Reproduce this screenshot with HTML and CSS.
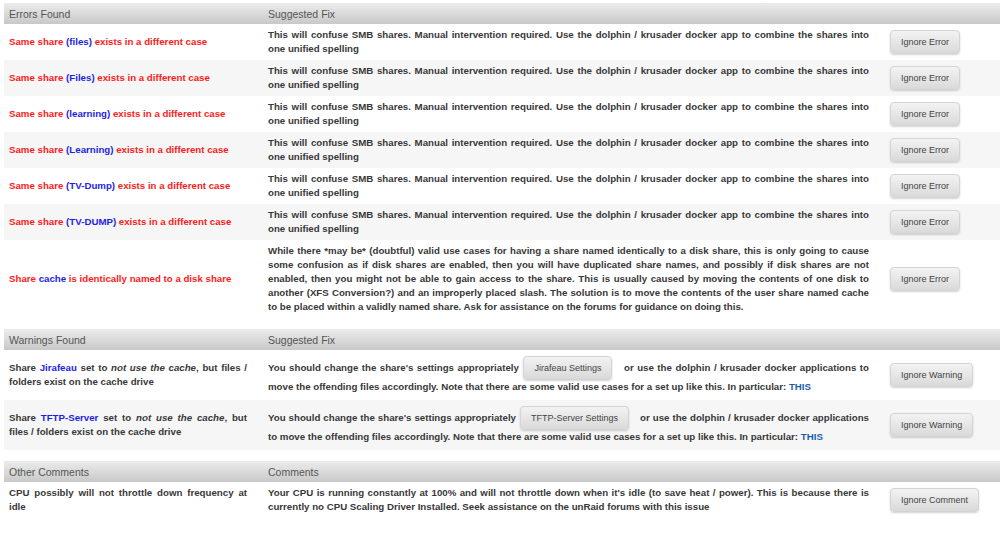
FILE: index.html
```html
<!DOCTYPE html>
<html lang="en">
<head>
  <meta charset="UTF-8" />
  <title>Fix Common Problems</title>
  <link rel="stylesheet" href="styles.css">
</head>
<body>
  <div class="results">

    <table class="report">
      <colgroup><col class="c-issue"><col class="c-fix"><col class="c-act"></colgroup>
      <thead>
        <tr><th>Errors Found</th><th>Suggested Fix</th><th></th></tr>
      </thead>
      <tbody>
        <tr>
          <td class="err">Same share <span class="share">(files)</span> exists in a different case</td>
          <td>This will confuse SMB shares. Manual intervention required. Use the dolphin / krusader docker app to combine the shares into one unified spelling</td>
          <td><button class="btn">Ignore Error</button></td>
        </tr>
        <tr>
          <td class="err">Same share <span class="share">(Files)</span> exists in a different case</td>
          <td>This will confuse SMB shares. Manual intervention required. Use the dolphin / krusader docker app to combine the shares into one unified spelling</td>
          <td><button class="btn">Ignore Error</button></td>
        </tr>
        <tr>
          <td class="err">Same share <span class="share">(learning)</span> exists in a different case</td>
          <td>This will confuse SMB shares. Manual intervention required. Use the dolphin / krusader docker app to combine the shares into one unified spelling</td>
          <td><button class="btn">Ignore Error</button></td>
        </tr>
        <tr>
          <td class="err">Same share <span class="share">(Learning)</span> exists in a different case</td>
          <td>This will confuse SMB shares. Manual intervention required. Use the dolphin / krusader docker app to combine the shares into one unified spelling</td>
          <td><button class="btn">Ignore Error</button></td>
        </tr>
        <tr>
          <td class="err">Same share <span class="share">(TV-Dump)</span> exists in a different case</td>
          <td>This will confuse SMB shares. Manual intervention required. Use the dolphin / krusader docker app to combine the shares into one unified spelling</td>
          <td><button class="btn">Ignore Error</button></td>
        </tr>
        <tr>
          <td class="err">Same share <span class="share">(TV-DUMP)</span> exists in a different case</td>
          <td>This will confuse SMB shares. Manual intervention required. Use the dolphin / krusader docker app to combine the shares into one unified spelling</td>
          <td><button class="btn">Ignore Error</button></td>
        </tr>
        <tr>
          <td class="err">Share <span class="share">cache</span> is identically named to a disk share</td>
          <td>While there *may be* (doubtful) valid use cases for having a share named identically to a disk share, this is only going to cause some confusion as if disk shares are enabled, then you will have duplicated share names, and possibly if disk shares are not enabled, then you might not be able to gain access to the share. This is usually caused by moving the contents of one disk to another (XFS Conversion?) and an improperly placed slash. The solution is to move the contents of the user share named cache to be placed within a validly named share. Ask for assistance on the forums for guidance on doing this.</td>
          <td><button class="btn">Ignore Error</button></td>
        </tr>
      </tbody>
    </table>

    <table class="report">
      <colgroup><col class="c-issue"><col class="c-fix"><col class="c-act"></colgroup>
      <thead>
        <tr><th>Warnings Found</th><th>Suggested Fix</th><th></th></tr>
      </thead>
      <tbody>
        <tr class="tall">
          <td>Share <span class="share">Jirafeau</span> set to <em>not use the cache</em>, but files / folders exist on the cache drive</td>
          <td>You should change the share's settings appropriately <button class="btn btn-inline">Jirafeau Settings</button> or use the dolphin / krusader docker applications to move the offending files accordingly. Note that there are some valid use cases for a set up like this. In particular: <a href="#" class="link">THIS</a></td>
          <td><button class="btn">Ignore Warning</button></td>
        </tr>
        <tr class="tall">
          <td>Share <span class="share">TFTP-Server</span> set to <em>not use the cache</em>, but files / folders exist on the cache drive</td>
          <td>You should change the share's settings appropriately <button class="btn btn-inline">TFTP-Server Settings</button> or use the dolphin / krusader docker applications to move the offending files accordingly. Note that there are some valid use cases for a set up like this. In particular: <a href="#" class="link">THIS</a></td>
          <td><button class="btn">Ignore Warning</button></td>
        </tr>
      </tbody>
    </table>

    <table class="report">
      <colgroup><col class="c-issue"><col class="c-fix"><col class="c-act"></colgroup>
      <thead>
        <tr><th>Other Comments</th><th>Comments</th><th></th></tr>
      </thead>
      <tbody>
        <tr>
          <td>CPU possibly will not throttle down frequency at idle</td>
          <td>Your CPU is running constantly at 100% and will not throttle down when it's idle (to save heat / power). This is because there is currently no CPU Scaling Driver Installed. Seek assistance on the unRaid forums with this issue</td>
          <td><button class="btn">Ignore Comment</button></td>
        </tr>
      </tbody>
    </table>

  </div>
</body>
</html>
```

FILE: styles.css
```css
:root {
  --text: #383838;
  --head: #555555;
  --red: #ff1a1a;
  --blue: #1e1ee6;
  --link: #1c5ea8;
  --stripe: #f6f6f6;
}

* {
  box-sizing: border-box;
}

body {
  margin: 0;
  background: #ffffff;
  color: var(--text);
  font-family: "Liberation Sans", Arial, sans-serif;
  overflow: hidden;
}

.results {
  padding: 3px 0 0 4px;
}

.report {
  width: 100%;
  table-layout: fixed;
  border-collapse: collapse;
  margin-bottom: 11px;
}

.c-issue { width: 259px; }
.c-fix { width: 622px; }

.report th {
  height: 21px;
  padding: 0 5px;
  text-align: left;
  font-size: 10.5px;
  font-weight: normal;
  color: var(--head);
  background: linear-gradient(to bottom, #ececec, #c8c8c8);
}

.report td {
  padding: 4px 16px 4px 5px;
  font-size: 9.7px;
  line-height: 14px;
  font-weight: bold;
  text-align: justify;
  vertical-align: middle;
}

.report tbody tr:nth-child(even) td {
  background: var(--stripe);
}

/* rows holding an inline settings button */
.report tr.tall td {
  height: 50px;
  padding-top: 4px;
  padding-bottom: 4px;
}

.err {
  color: var(--red);
}

.share {
  color: var(--blue);
}

.link {
  color: var(--link);
  text-decoration: none;
}

.btn {
  height: 24px;
  padding: 0 10px;
  font-family: "Liberation Sans", Arial, sans-serif;
  font-size: 9px;
  font-weight: normal;
  color: #444444;
  border: 1px solid #d4d4d4;
  border-radius: 4px;
  background: linear-gradient(to bottom, #f3f3f3, #d9d9d9);
  box-shadow: 0 1px 2px rgba(0, 0, 0, 0.18);
  cursor: pointer;
}

.btn-inline {
  margin: 0 8px 0 1px;
  vertical-align: middle;
}
```
